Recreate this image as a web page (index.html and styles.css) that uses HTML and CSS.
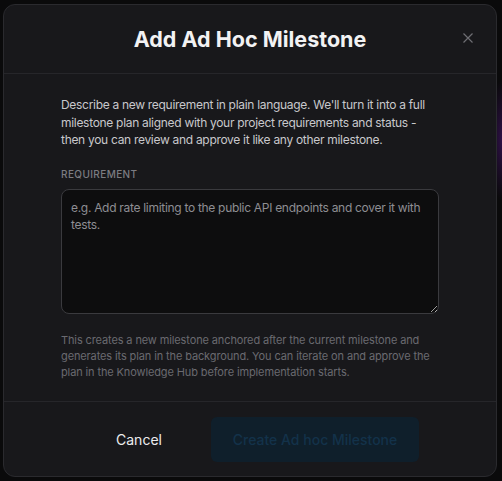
FILE: index.html
```html
<!DOCTYPE html>
<html lang="en">
<head>
    <meta charset="UTF-8">
    <meta name="viewport" content="width=device-width, initial-scale=1.0">
    <title>Add Ad Hoc Milestone</title>
    <link rel="stylesheet" href="styles.css">
</head>
<body>
    <div class="modal">
        <div class="modal-header">
            <h2>Add Ad Hoc Milestone</h2>
            <button class="close-btn" aria-label="Close">
                <svg width="10" height="10" viewBox="0 0 10 10">
                    <path d="M0.5 0.5L9.5 9.5M9.5 0.5L0.5 9.5" stroke="currentColor" stroke-width="1.2" fill="none"/>
                </svg>
            </button>
        </div>

        <div class="modal-body">
            <p class="intro">Describe a new requirement in plain language. We'll turn it into a full milestone plan aligned with your project requirements and status - then you can review and approve it like any other milestone.</p>

            <label class="field-label" for="requirement">Requirement</label>
            <textarea id="requirement" placeholder="e.g. Add rate limiting to the public API endpoints and cover it with tests."></textarea>

            <p class="hint">This creates a new milestone anchored after the current milestone and generates its plan in the background. You can iterate on and approve the plan in the Knowledge Hub before implementation starts.</p>
        </div>

        <div class="modal-footer">
            <button class="btn-cancel">Cancel</button>
            <button class="btn-create" disabled>Create Ad hoc Milestone</button>
        </div>
    </div>
</body>
</html>
```

FILE: styles.css
```css
* {
    margin: 0;
    padding: 0;
    box-sizing: border-box;
    font-family: Inter, 'Noto Sans', sans-serif;
}

body {
    background:
        radial-gradient(ellipse 14px 60px at 100% 140px, rgba(70, 20, 110, 0.6), transparent),
        #0a0a0b;
    height: 481px;
    padding: 4px 0 0 3px;
    overflow: hidden;
}

.modal {
    width: 494px;
    height: 473px;
    background: #18181b;
    border: 1px solid #2a2a2e;
    border-radius: 12px;
    display: flex;
    flex-direction: column;
}

.modal-header {
    flex-shrink: 0;
    height: 69px;
    border-bottom: 1px solid #26262a;
    display: flex;
    align-items: center;
    justify-content: center;
    position: relative;
}

.modal-header h2 {
    color: #f2f2f3;
    font-size: 21.5px;
    font-weight: 700;
    letter-spacing: 0;
}

.close-btn {
    position: absolute;
    right: 23px;
    top: 28px;
    background: none;
    border: none;
    color: #6e6e73;
    width: 10px;
    height: 10px;
    display: flex;
}

.modal-body {
    padding: 22px 58px 0 57px;
    flex: 1;
    min-height: 0;
    overflow: hidden;
    display: flex;
    flex-direction: column;
}

.intro {
    color: #c8c8cc;
    font-size: 12px;
    line-height: 17.5px;
    letter-spacing: -0.3px;
}

.field-label {
    margin-top: 19px;
    color: #7c7c82;
    font-size: 10px;
    font-weight: 500;
    line-height: 12px;
    letter-spacing: 0.4px;
    text-transform: uppercase;
}

textarea {
    flex-shrink: 0;
    margin-top: 9px;
    width: 378px;
    height: 125px;
    background: #0d0d0e;
    border: 1px solid #3a3a3e;
    border-radius: 8px;
    padding: 9px 9px;
    color: #d8d8dc;
    font-size: 12px;
    line-height: 17.5px;
    letter-spacing: -0.3px;
    outline: none;
}

textarea::placeholder {
    color: #8e8e93;
}

.hint {
    margin-top: 18px;
    color: #6a6a70;
    font-size: 11px;
    line-height: 16px;
    letter-spacing: -0.12px;
}

.modal-footer {
    flex-shrink: 0;
    height: 75px;
    border-top: 1px solid #26262a;
    display: flex;
    align-items: center;
    gap: 2px;
    padding-left: 65px;
}

.btn-cancel {
    width: 140px;
    height: 45px;
    background: none;
    border: none;
    color: #ececee;
    font-size: 14px;
    font-weight: 400;
}

.btn-create {
    width: 208px;
    height: 45px;
    background: #0f1f2b;
    border: none;
    border-radius: 6px;
    color: #13324a;
    font-size: 14px;
    font-weight: 500;
}
```
